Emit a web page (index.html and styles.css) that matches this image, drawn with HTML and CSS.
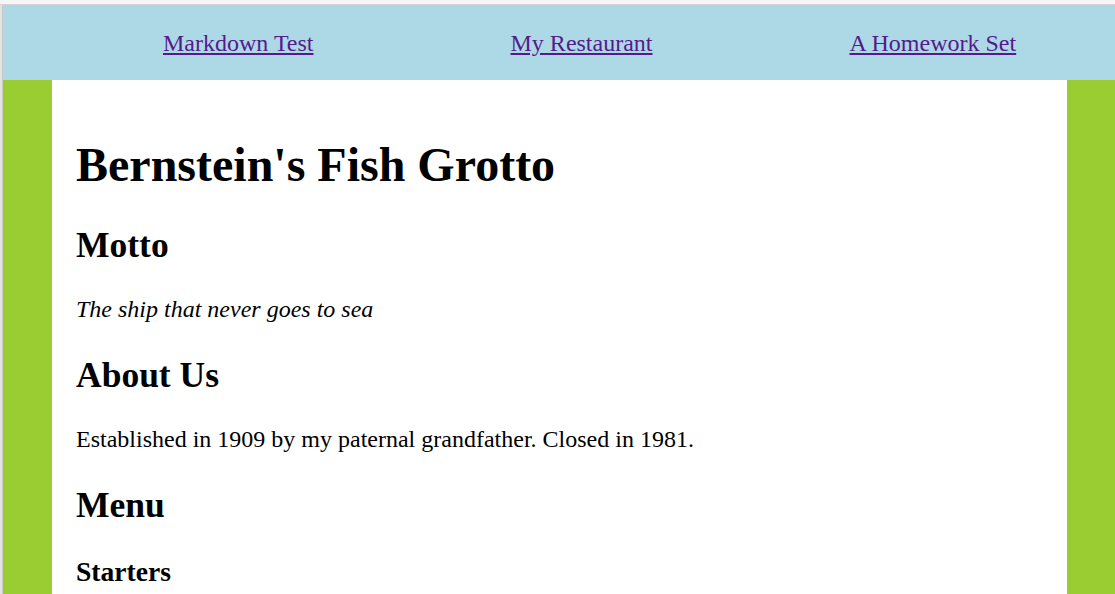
FILE: index.html
```html
<!DOCTYPE html>
<html>
<head>
<meta charset="utf-8">
<title>Bernstein's Fish Grotto</title>
<link rel="stylesheet" href="styles.css">
</head>
<body>
<div class="topstrip"></div>
<div class="frame">
  <div class="leftstrip"></div>
  <div class="page">
    <nav class="nav">
      <a href="#">Markdown Test</a>
      <a href="#">My Restaurant</a>
      <a href="#">A Homework Set</a>
    </nav>
    <div class="bg">
      <main class="content">
        <h1>Bernstein's Fish Grotto</h1>
        <h2>Motto</h2>
        <p><em>The ship that never goes to sea</em></p>
        <h2>About Us</h2>
        <p>Established in 1909 by my paternal grandfather. Closed in 1981.</p>
        <h2>Menu</h2>
        <h3>Starters</h3>
      </main>
    </div>
  </div>
</div>
</body>
</html>
```
FILE: styles.css
```css
html, body {
  margin: 0;
  padding: 0;
  height: 100%;
  overflow: hidden;
}
body {
  font-family: "Liberation Serif", "Times New Roman", serif;
  background: #f6f6f6;
  display: flex;
  flex-direction: column;
}
.topstrip {
  height: 4px;
  background: #f6f6f6;
  border-bottom: 1px solid #d4d4d4;
  flex: none;
}
.frame {
  flex: 1;
  display: flex;
  min-height: 0;
}
.leftstrip {
  width: 2px;
  background: #e4e4e4;
  border-right: 1px solid #c8c8c8;
  flex: none;
}
.page {
  flex: 1;
  display: flex;
  flex-direction: column;
  min-width: 0;
}
.nav {
  height: 75px;
  background: #add8e6;
  display: flex;
  align-items: center;
  padding-left: 160px;
  gap: 197px;
  padding-top: 2px;
  box-sizing: border-box;
  flex: none;
}
.nav a {
  font-size: 24px;
  color: #551a8b;
  text-decoration: underline;
}
.bg {
  flex: 1;
  background: #9acd32;
  padding: 0 48px 0 49px;
  display: flex;
}
.content {
  flex: 1;
  background: #fff;
  padding: 25px 24px 0 24px;
  color: #000;
}
.content h1 {
  font-size: 48px;
  margin: 32px 0 32px;
}
.content h2 {
  font-size: 35.5px;
  margin: 31px 0 30px;
}
.content p {
  font-size: 24px;
  margin: 24px 0;
}
.content h3 {
  font-size: 27.6px;
  margin: 28px 0;
}
```
